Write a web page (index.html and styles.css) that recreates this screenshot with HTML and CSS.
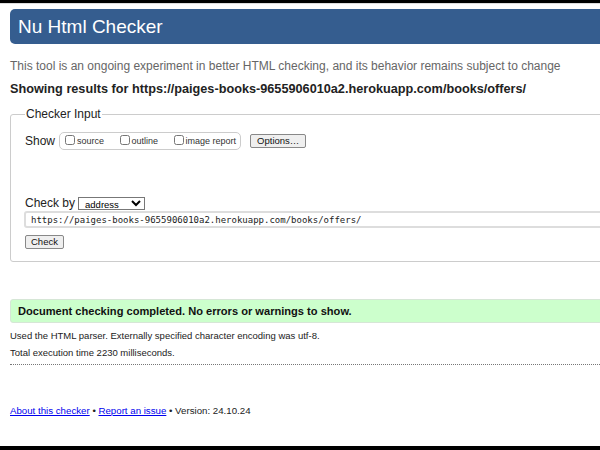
FILE: index.html
```html
<!DOCTYPE html>
<html lang="en">
<head>
<meta charset="utf-8">
<title>Nu Html Checker</title>
<link rel="stylesheet" href="styles.css">
</head>
<body>
<div class="frame-top"></div>
<div class="page">
  <h1 class="title">Nu Html Checker</h1>
  <p class="intro">This tool is an ongoing experiment in better HTML checking, and its behavior remains subject to change</p>
  <p class="showing">Showing results for https://paiges-books-9655906010a2.herokuapp.com/books/offers/</p>
  <fieldset class="input-box">
    <legend>Checker Input</legend>
    <div class="show-row">
      <span class="show-label">Show</span>
      <span class="opts">
        <label><input type="checkbox"> source</label>
        <label><input type="checkbox"> outline</label>
        <label><input type="checkbox"> image report</label>
      </span>
      <button class="btn" type="button">Options…</button>
    </div>
    <div class="checkby-row">
      <span class="checkby-label">Check by</span>
      <select class="sel"><option>address</option></select>
    </div>
    <input class="url" type="text" value="https://paiges-books-9655906010a2.herokuapp.com/books/offers/">
    <button class="btn check" type="button">Check</button>
  </fieldset>
  <div class="success">Document checking completed. No errors or warnings to show.</div>
  <p class="details">Used the HTML parser. Externally specified character encoding was utf-8.</p>
  <p class="details">Total execution time 2230 milliseconds.</p>
  <hr class="dots">
  <p class="footer"><a href="#">About this checker</a> • <a href="#">Report an issue</a> • Version: 24.10.24</p>
</div>
<div class="frame-bottom"></div>
</body>
</html>
```
FILE: styles.css
```css
html, body {
  margin: 0;
  padding: 0;
  overflow: hidden;
  background: #fff;
}
body {
  font-family: "Liberation Sans", Arial, sans-serif;
  color: #222;
  width: 640px;
}
.frame-top {
  height: 3px;
  background: #000;
  border-bottom: 1px solid #ddd;
}
.frame-bottom {
  position: fixed;
  left: 0;
  right: 0;
  bottom: 0;
  height: 4px;
  background: #000;
}
.page {
  padding: 5px 0 0 10px;
}
.title {
  margin: 0;
  height: 35px;
  line-height: 35px;
  padding-left: 8px;
  background: #355d8f;
  color: #fff;
  font-size: 19px;
  font-weight: normal;
  border-radius: 5px 0 0 5px;
}
.intro {
  margin: 15px 0 0;
  font-size: 12px;
  color: #666;
  line-height: 14px;
}
.showing {
  margin: 9px 0 0;
  font-size: 12.7px;
  font-weight: bold;
  color: #222;
  line-height: 15px;
}
.input-box {
  margin: 10px 0 0;
  padding: 11px 14px 12px 14px;
  border: 1px solid #ccc;
  border-radius: 3px;
}
.input-box legend {
  font-size: 12px;
  padding: 0 1px;
  color: #222;
  margin-left: 0;
}
.show-row {
  display: flex;
  align-items: center;
  height: 18px;
}
.show-label {
  font-size: 12px;
  margin-right: 4px;
}
.opts {
  display: inline-flex;
  align-items: center;
  border: 1px solid #ccc;
  border-radius: 5px;
  padding: 0 4px 0 5px;
  height: 16px;
  font-size: 9px;
  color: #333;
}
.opts label {
  display: inline-flex;
  align-items: center;
  margin-right: 15.5px;
}
.opts label:last-child { margin-right: 0; }
.opts input {
  width: 10px;
  height: 10px;
  margin: 0 2px 2px 0;
}
.btn {
  font-family: "Liberation Sans", Arial, sans-serif;
  font-size: 9.5px;
  background: #efefef;
  border: 1px solid #888;
  border-radius: 2px;
  padding: 0 5px;
  height: 14px;
  line-height: 12px;
  color: #111;
}
.show-row .btn { margin-left: 9px; padding: 0 6px; }
.checkby-row {
  display: flex;
  align-items: center;
  margin-top: 45px;
  height: 16px;
}
.checkby-label {
  font-size: 12px;
  margin-right: 3px;
}
.sel {
  font-family: "Liberation Sans", Arial, sans-serif;
  font-size: 9.5px;
  width: 67px;
  height: 13px;
  padding: 0 2px;
  border: 1px solid #777;
  border-radius: 0;
  background: #fff;
}
.url {
  display: block;
  box-sizing: border-box;
  width: 620px;
  height: 17px;
  margin: 0 0 0 -1px;
  padding: 0 5px;
  border: 2px solid #ddd;
  border-radius: 3px;
  font-family: "DejaVu Sans Mono", "Liberation Mono", monospace;
  font-size: 9px;
  color: #222;
}
.check {
  display: block;
  margin-top: 7px;
  padding: 0 5px;
}
.success {
  margin-top: 37px;
  height: 22px;
  line-height: 22px;
  background: #ccffcc;
  border: 1px solid #d6e6d6;
  border-radius: 3px;
  padding-left: 7px;
  font-size: 11.1px;
  font-weight: bold;
  color: #111;
}
.details {
  margin: 7px 0 0;
  font-size: 9.5px;
  line-height: 12px;
  color: #222;
}
.details + .details { margin-top: 5px; }
.dots {
  margin: 5px 0 0;
  border: 0;
  border-top: 1px dotted #777;
  height: 0;
}
.footer {
  margin: 40px 0 0;
  font-size: 9.7px;
  color: #222;
}
.footer a { color: #00e; }
```
